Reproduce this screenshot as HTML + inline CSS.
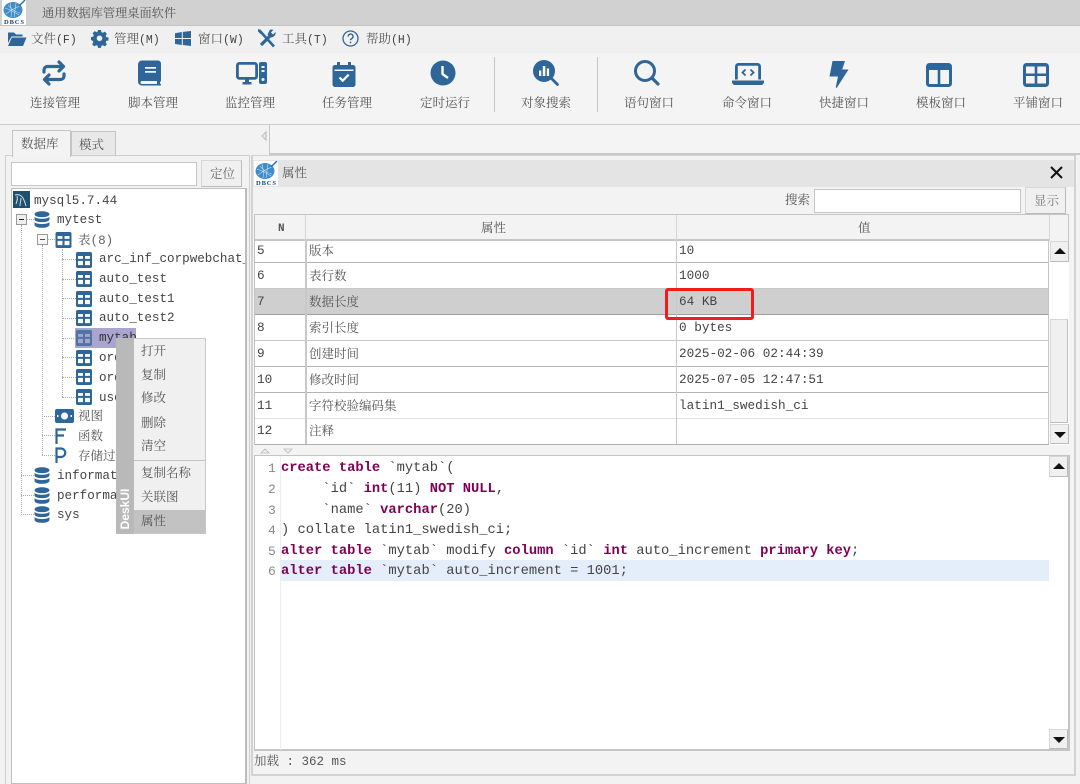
<!DOCTYPE html>
<html><head><meta charset="utf-8">
<style>
html,body{margin:0;padding:0;width:1080px;height:784px;overflow:hidden;background:#f2f2f2}
#r{position:relative;width:1080px;height:784px;overflow:hidden;filter:blur(.3px);font-family:"Liberation Serif","Noto Serif CJK SC",serif;color:#555;font-size:12.5px}
.b{position:absolute;box-sizing:border-box}
.t{position:absolute;white-space:nowrap;line-height:20px;height:20px;margin-top:1px}
.m{font-family:"Liberation Mono","Noto Serif CJK SC",monospace;color:#444;font-size:12.6px}
.c{font-family:"Liberation Mono",monospace;color:#444;font-size:13.77px;white-space:pre;margin-top:3px}
.c b{color:#7f0055}
svg{position:absolute;overflow:visible}
.g{color:#888;font-family:"Liberation Mono",monospace;font-size:13px;margin-top:3px}
.n{font-family:"Liberation Mono",monospace;color:#444;font-size:12.7px}
.btn{position:absolute;box-sizing:border-box;background:#f0f0f0;border:1px solid #d6d6d6;border-right-color:#bbb;border-bottom-color:#bbb}
.tri{position:absolute;width:0;height:0;border-left:6px solid transparent;border-right:6px solid transparent}
.dv{position:absolute;border-left:1px dotted #aaa}
.dh{position:absolute;border-top:1px dotted #aaa}
</style></head><body><div id="r">
<svg width="0" height="0" style="position:absolute"><defs>
<symbol id="tb" viewBox="1 1 14 14"><path fill="#2f6699" fill-rule="evenodd" d="M2.500 1h11A1.500 1.500 0 0 1 15 2.500v11a1.500 1.500 0 0 1-1.500 1.500h-11A1.500 1.500 0 0 1 1 13.500v-11A1.500 1.500 0 0 1 2.500 1zM2.800 4.500V7h4.300V4.500zM8.900 4.500V7h4.300V4.500zM2.800 8.800v3.700h4.300V8.800zM8.900 8.800v3.700h4.300V8.800z"/></symbol>
<symbol id="db" viewBox="1 0 14 16"><g fill="#2f6699"><path d="M1 3c0-1.600 3-2.800 7-2.800s7 1.200 7 2.800-3 2.800-7 2.800S1 4.600 1 3z"/><path d="M1 5.500c1.500 1.300 4 1.800 7 1.800s5.500-.5 7-1.800V8c0 1.400-3 2.500-7 2.500S1 9.400 1 8z"/><path d="M1 10.500c1.500 1.300 4 1.800 7 1.800s5.500-.5 7-1.800V13c0 1.500-3 2.800-7 2.800S1 14.500 1 13z"/></g></symbol>
<symbol id="ball" viewBox="0 0 24 19"><ellipse cx="11" cy="10" rx="9.500" ry="8" fill="#3f8ccb"/><path d="M3 8c4 1 9 4 14 7M4 14c4-3 8-6 14-8M8 3c1 4 2 9 1 14M14 3L12 17M6 5c3 4 7 7 12 8" stroke="#d6e9f6" stroke-width=".55" fill="none"/><path d="M17 6l6-6" stroke="#2a6aa5" stroke-width="1.400"/></symbol>
</defs></svg>

<!-- title bar -->
<div class="b" style="left:0;top:0;width:1080px;height:26px;background:#d1d1d1;border-bottom:1px solid #c4c4c4"></div>
<div class="b" style="left:2px;top:0;width:24px;height:25px;background:#fff"></div>
<svg style="left:2px;top:0" width="24" height="19"><use href="#ball" width="24" height="19"/></svg>
<svg style="left:2px;top:18px" width="24" height="7"><text x="12" y="6" text-anchor="middle" font-family="Liberation Serif" font-weight="bold" font-size="6.500" fill="#1c3f86" textLength="20">DBCS</text></svg>
<span class="t" style="left:42px;top:2px;font-size:12.2px">通用数据库管理桌面软件</span>

<!-- menu bar -->
<div class="b" style="left:0;top:26px;width:1080px;height:27px;background:#f0f0f0"></div>
<svg style="left:7px;top:30px" width="20" height="18" viewBox="0 0 20 18"><path fill="#2f6699" d="M1 2.500h6l2 2h6.500v2H4.500L1 13z"/><path fill="#2f6699" d="M4.800 7.500H19.500L16 16H1z"/></svg>
<span class="t" style="left:31px;top:28px">文件<span class="m" style="font-size:11.500px">(F)</span></span>
<svg style="left:91px;top:30px" width="17" height="17" viewBox="0 0 17 17"><path fill="#2f6699" fill-rule="evenodd" d="M7 .5h3l.4 2.100 1.500.7 1.900-1.200 2.100 2.100-1.200 1.900.6 1.500 2.200.4v3l-2.200.4-.6 1.500 1.200 1.900-2.100 2.100-1.900-1.200-1.500.6-.4 2.100H7l-.4-2.100-1.500-.6-1.900 1.200-2.100-2.100 1.200-1.900-.6-1.500L0 10.500v-3l2.200-.4.600-1.500L1.600 3.700l2.100-2.100 1.900 1.200 1-.7zM8.500 6a2.800 2.800 0 1 0 0 5.600 2.800 2.800 0 0 0 0-5.600z" transform="translate(0 -.5)"/></svg>
<span class="t" style="left:114px;top:28px">管理<span class="m" style="font-size:11.500px">(M)</span></span>
<svg style="left:175px;top:31px" width="16" height="15" viewBox="0 0 16 15"><path fill="#2f6699" d="M0 2.200L6.800 1v6H0zM7.800.9L16 0v7H7.800zM0 8h6.800v6L0 13zM7.800 8H16v7l-8.200-1z"/></svg>
<span class="t" style="left:198px;top:28px">窗口<span class="m" style="font-size:11.500px">(W)</span></span>
<svg style="left:258px;top:29px" width="18" height="19" viewBox="0 0 18 19"><g fill="none" stroke="#2f6699"><path stroke-width="2.600" d="M1.500 1.500l14.500 16"/><path stroke-width="3.200" d="M3 16l8.500-8.500"/></g><path fill="#2f6699" d="M12 .5l3.500.3-2.500 2.700 2 2 2.500-2.500c.6 2.600-1.400 5.700-5.500 5.500L9.500 5.500z"/><path fill="#2f6699" d="M0 0l3 1 1 3-1.500 1L0 2.500z"/></svg>
<span class="t" style="left:282px;top:28px">工具<span class="m" style="font-size:11.500px">(T)</span></span>
<svg style="left:342px;top:30px" width="17" height="17" viewBox="0 0 17 17"><circle cx="8.500" cy="8.500" r="7.500" fill="none" stroke="#2f6699" stroke-width="1.300"/><path d="M6.200 6.500a2.400 2.400 0 1 1 3.500 2.100c-.8.400-1.200.9-1.200 1.700" fill="none" stroke="#2f6699" stroke-width="1.400"/><circle cx="8.500" cy="12.500" r=".9" fill="#2f6699"/></svg>
<span class="t" style="left:366px;top:28px">帮助<span class="m" style="font-size:11.500px">(H)</span></span>

<!-- toolbar -->
<div class="b" style="left:0;top:53px;width:1080px;height:72px;background:#f4f4f4;border-bottom:1px solid #cbcbcb"></div>
<svg style="left:41px;top:60px" width="26" height="26" viewBox="0 0 26 26"><g fill="none" stroke="#2f6699" stroke-width="3.200" stroke-linecap="round" stroke-linejoin="round"><path d="M3 12V10a3.500 3.500 0 0 1 3.500-3.500H22"/><path d="M18 2l4.500 4.500L18 11"/><path d="M23 14v2a3.500 3.500 0 0 1-3.500 3.500H4"/><path d="M8 15l-4.500 4.500L8 24"/></g></svg>
<svg style="left:138px;top:60px" width="24" height="26" viewBox="0 0 24 26"><path fill="#2f6699" fill-rule="evenodd" d="M4 .5h16a3 3 0 0 1 3 3v17c0 .8-.5 1-1 1.500v1.500c.6.300 1 .6 1 1.200s-.4.800-1 .8H4a4 4 0 0 1-4-4V4.500a4 4 0 0 1 4-4zM7 7v1.800h11V7zM7 11v1.800h11V11zM4 21a1.500 1.500 0 0 0 0 3h15v-3z"/></svg>
<svg style="left:236px;top:62px" width="31" height="24" viewBox="0 0 31 24"><path fill="none" stroke="#2f6699" stroke-width="2.800" d="M3.400 1.400h15.200a2 2 0 0 1 2 2v11a2 2 0 0 1-2 2H3.400a2 2 0 0 1-2-2v-11a2 2 0 0 1 2-2z"/><path fill="#2f6699" d="M9 17h4v3h2.500v2.500h-9V20H9z"/><path fill="#2f6699" fill-rule="evenodd" d="M25 0h4a2 2 0 0 1 2 2v18a2 2 0 0 1-2 2h-4a2 2 0 0 1-2-2V2a2 2 0 0 1 2-2zm.5 4v2h3V4zm0 4v2h3V8zm1.500 8a1.500 1.500 0 1 0 0 3 1.500 1.500 0 0 0 0-3z"/></svg>
<svg style="left:332px;top:62px" width="24" height="25" viewBox="0 0 24 25"><path fill="#2f6699" d="M5 0h3v3h8V0h3v3h2a2.500 2.500 0 0 1 2.500 2.500v17A2.500 2.500 0 0 1 21 25H3a2.500 2.500 0 0 1-2.500-2.500v-17A2.500 2.500 0 0 1 3 3h2z"/><path fill="#f4f4f4" d="M2.500 7.500h19v1.500h-19z"/><path fill="none" stroke="#fff" stroke-width="2.200" d="M7.500 15.500l3.200 3.200 6-6"/></svg>
<svg style="left:430px;top:60px" width="26" height="26" viewBox="0 0 26 26"><circle cx="13" cy="13" r="12.500" fill="#2f6699"/><path d="M12.500 6v8l5.500 4" fill="none" stroke="#fff" stroke-width="2.400"/></svg>
<div class="b" style="left:494px;top:57px;width:1px;height:55px;background:#c6c6c6"></div>
<svg style="left:533px;top:60px" width="26" height="26" viewBox="0 0 26 26"><circle cx="11" cy="11" r="11" fill="#2f6699"/><path d="M18 18l6.500 6.500" stroke="#2f6699" stroke-width="2.800" stroke-linecap="round"/><path d="M6 10.500h2.300v5.500H6zM9.800 6h2.500v10H9.800zM13.800 8.500h2.300V16h-2.300z" fill="#fff"/></svg>
<div class="b" style="left:597px;top:57px;width:1px;height:55px;background:#c6c6c6"></div>
<svg style="left:634px;top:60px" width="26" height="26" viewBox="0 0 26 26"><circle cx="11" cy="11" r="9.500" fill="none" stroke="#2f6699" stroke-width="3"/><path d="M18 18l6 6" stroke="#2f6699" stroke-width="3.200" stroke-linecap="round"/></svg>
<svg style="left:732px;top:63px" width="32" height="23" viewBox="0 0 32 23"><path fill="none" stroke="#2f6699" stroke-width="2.800" d="M4.400 16.500V3.400a2 2 0 0 1 2-2h19.200a2 2 0 0 1 2 2v13.100"/><path fill="#2f6699" d="M0 17.500h32v1.500a3 3 0 0 1-3 3H3a3 3 0 0 1-3-3z"/><path fill="none" stroke="#2f6699" stroke-width="1.800" d="M13.500 6.500l-3 3 3 3M18.500 6.500l3 3-3 3"/></svg>
<svg style="left:829px;top:61px" width="20" height="27" viewBox="0 0 20 27"><path fill="#2f6699" d="M3.500 0h12.500l-2.800 8.500H19.500L8 26.500c-.5.600-1.400.2-1.200-.6L9 15.500H0.500z"/></svg>
<svg style="left:926px;top:63px" width="26" height="24" viewBox="0 0 26 24"><path fill="#2f6699" fill-rule="evenodd" d="M3.500 0h19A3.500 3.500 0 0 1 26 3.500v17a3.500 3.500 0 0 1-3.500 3.500h-19A3.500 3.500 0 0 1 0 20.500v-17A3.500 3.500 0 0 1 3.500 0zM3 7v14h8.700V7zM14.300 7v14H23V7z"/></svg>
<svg style="left:1023px;top:63px" width="26" height="24" viewBox="0 0 26 24"><path fill="#2f6699" fill-rule="evenodd" d="M3.500 0h19A3.500 3.500 0 0 1 26 3.500v17a3.500 3.500 0 0 1-3.500 3.500h-19A3.500 3.500 0 0 1 0 20.500v-17A3.500 3.500 0 0 1 3.500 0zM3 3.500v7h8.700v-7zM14.300 3.500v7H23v-7zM3 13v7.500h8.700V13zM14.300 13v7.500H23V13z"/></svg>

<span class="t" style="left:30px;top:92px">连接管理</span>
<span class="t" style="left:128px;top:92px">脚本管理</span>
<span class="t" style="left:225px;top:92px">监控管理</span>
<span class="t" style="left:322px;top:92px">任务管理</span>
<span class="t" style="left:420px;top:92px">定时运行</span>
<span class="t" style="left:521px;top:92px">对象搜索</span>
<span class="t" style="left:624px;top:92px">语句窗口</span>
<span class="t" style="left:722px;top:92px">命令窗口</span>
<span class="t" style="left:819px;top:92px">快捷窗口</span>
<span class="t" style="left:916px;top:92px">模板窗口</span>
<span class="t" style="left:1013px;top:92px">平铺窗口</span>

<!-- left pane -->
<div class="b" style="left:5px;top:155px;width:245px;height:629px;background:#f2f2f2;border:1px solid #cfcfcf;border-bottom:0"></div>
<div class="b" style="left:71px;top:131px;width:45px;height:25px;background:#e8e8e8;border:1px solid #c4c4c4;border-bottom:1px solid #cfcfcf"></div>
<div class="b" style="left:12px;top:130px;width:59px;height:27px;background:#f3f3f3;border:1px solid #c4c4c4;border-bottom:0"></div>
<span class="t" style="left:21px;top:133px">数据库</span>
<span class="t" style="left:79px;top:134px">模式</span>
<svg style="left:261px;top:131px" width="6" height="10"><path d="M5 1L1 5l4 4z" fill="#eee" stroke="#bbb"/></svg>
<div class="b" style="left:269px;top:125px;width:811px;height:30px;background:#f4f4f4;border-left:1px solid #c8c8c8;border-bottom:2px solid #c8c8c8"></div>

<div class="b" style="left:11px;top:162px;width:186px;height:24px;background:#fff;border:1px solid #c6c6c6"></div>
<div class="btn" style="left:201px;top:160px;width:41px;height:27px"></div>
<span class="t" style="left:210px;top:163px;color:#666">定位</span>

<div class="b" style="left:11px;top:188px;width:236px;height:596px;background:#fff;border:1px solid #c0c0c0;border-right:2px solid #bbb"></div>

<!-- tree lines -->
<div class="dv" style="left:21px;top:225px;height:290px"></div>
<div class="dv" style="left:42px;top:245px;height:210px"></div>
<div class="dv" style="left:62px;top:249px;height:148px"></div>
<div class="dh" style="left:62px;top:259px;width:14px"></div>
<div class="dh" style="left:62px;top:279px;width:14px"></div>
<div class="dh" style="left:62px;top:298px;width:14px"></div>
<div class="dh" style="left:62px;top:318px;width:14px"></div>
<div class="dh" style="left:62px;top:338px;width:14px"></div>
<div class="dh" style="left:62px;top:357px;width:14px"></div>
<div class="dh" style="left:62px;top:377px;width:14px"></div>
<div class="dh" style="left:62px;top:397px;width:14px"></div>
<div class="dh" style="left:42px;top:416px;width:13px"></div>
<div class="dh" style="left:42px;top:435px;width:13px"></div>
<div class="dh" style="left:42px;top:455px;width:13px"></div>
<div class="dh" style="left:21px;top:475px;width:13px"></div>
<div class="dh" style="left:21px;top:495px;width:13px"></div>
<div class="dh" style="left:21px;top:514px;width:13px"></div>
<div class="dh" style="left:26px;top:219px;width:8px"></div>
<div class="dh" style="left:47px;top:239px;width:8px"></div>

<div class="b" style="left:16px;top:214px;width:11px;height:11px;background:#eee;border:1px solid #999"><div class="b" style="left:2px;top:4px;width:5px;height:1px;background:#222"></div></div>
<div class="b" style="left:37px;top:234px;width:11px;height:11px;background:#f6f6f6;border:1px solid #999"><div class="b" style="left:2px;top:4px;width:5px;height:1px;background:#555"></div></div>

<svg style="left:13px;top:191px" width="17" height="17" viewBox="0 0 17 17"><rect width="17" height="17" fill="#20506f"/><path d="M2 4c3-1 6 0 8 3 1 2 2 4 3 8M4 5c1 3 0 5-1 8M8 7c0 3-1 5-1 8" fill="none" stroke="#cfe0ea" stroke-width="1"/></svg>
<span class="t m" style="left:34px;top:190px">mysql5.7.44</span>
<svg style="left:34px;top:211px" width="16" height="17"><use href="#db" width="16" height="17"/></svg>
<span class="t m" style="left:57px;top:209px">mytest</span>
<svg style="left:55px;top:232px" width="17" height="16"><use href="#tb" width="17" height="16"/></svg>
<span class="t" style="left:78px;top:229px">表<span class="m" style="color:#666">(8)</span></span>

<div class="b" style="left:75px;top:328px;width:61px;height:20px;background:#a9a5cf"></div>
<svg style="left:76px;top:252px" width="16" height="16"><use href="#tb" width="16" height="16"/></svg>
<span class="t m" style="left:99px;top:248px;width:146px;overflow:hidden">arc_inf_corpwebchat_log</span>
<svg style="left:76px;top:271px" width="16" height="16"><use href="#tb" width="16" height="16"/></svg>
<span class="t m" style="left:99px;top:268px">auto_test</span>
<svg style="left:76px;top:291px" width="16" height="16"><use href="#tb" width="16" height="16"/></svg>
<span class="t m" style="left:99px;top:288px">auto_test1</span>
<svg style="left:76px;top:310px" width="16" height="16"><use href="#tb" width="16" height="16"/></svg>
<span class="t m" style="left:99px;top:307px">auto_test2</span>
<svg style="left:76px;top:330px;opacity:.75" width="16" height="16"><use href="#tb" width="16" height="16"/></svg>
<span class="t m" style="left:99px;top:327px;color:#333">mytab</span>
<svg style="left:76px;top:350px" width="16" height="16"><use href="#tb" width="16" height="16"/></svg>
<span class="t m" style="left:99px;top:347px">orders</span>
<svg style="left:76px;top:369px" width="16" height="16"><use href="#tb" width="16" height="16"/></svg>
<span class="t m" style="left:99px;top:367px">orders2</span>
<svg style="left:76px;top:389px" width="16" height="16"><use href="#tb" width="16" height="16"/></svg>
<span class="t m" style="left:99px;top:387px">user</span>
<svg style="left:55px;top:409px" width="19" height="14" viewBox="0 0 19 14"><path fill="#2f6699" fill-rule="evenodd" d="M2 0h15a2 2 0 0 1 2 2v10a2 2 0 0 1-2 2H2a2 2 0 0 1-2-2V2a2 2 0 0 1 2-2zm7.500 3.500a3.500 3.500 0 1 0 0 7 3.500 3.500 0 0 0 0-7zM2 6v2h1.500V6zM15.500 6v2H17V6z"/></svg>
<span class="t" style="left:78px;top:405px">视图</span>
<svg style="left:55px;top:428px" width="12" height="16" viewBox="0 0 12 16"><path fill="none" stroke="#2f6699" stroke-width="2.200" d="M1.500 16V1.500H11M1.500 7.500H9"/></svg>
<span class="t" style="left:78px;top:425px">函数</span>
<svg style="left:55px;top:447px" width="12" height="16" viewBox="0 0 12 16"><path fill="none" stroke="#2f6699" stroke-width="2.200" d="M1.500 16V1.500H6a4 4 0 0 1 0 8.500H1.500"/></svg>
<span class="t" style="left:78px;top:445px">存储过程</span>
<svg style="left:34px;top:467px" width="16" height="17"><use href="#db" width="16" height="17"/></svg>
<span class="t m" style="left:57px;top:465px">information_schema</span>
<svg style="left:34px;top:487px" width="16" height="17"><use href="#db" width="16" height="17"/></svg>
<span class="t m" style="left:57px;top:485px">performance_schema</span>
<svg style="left:34px;top:506px" width="16" height="17"><use href="#db" width="16" height="17"/></svg>
<span class="t m" style="left:57px;top:504px">sys</span>

<!-- right panel -->
<div class="b" style="left:250px;top:155px;width:830px;height:629px;background:#f2f2f2"></div>
<div class="b" style="left:251px;top:155px;width:825px;height:621px;background:#f3f3f3;border:2px solid #d2d2d2;border-top:1px solid #d2d2d2"></div>
<div class="b" style="left:253px;top:160px;width:821px;height:27px;background:#e4e4e4"></div>
<div class="b" style="left:254px;top:161px;width:24px;height:25px;background:#fff"></div>
<svg style="left:254px;top:161px" width="24" height="19"><use href="#ball" width="24" height="19"/></svg>
<svg style="left:254px;top:179px" width="24" height="7"><text x="12" y="6" text-anchor="middle" font-family="Liberation Serif" font-weight="bold" font-size="6.500" fill="#1c3f86" textLength="20">DBCS</text></svg>
<span class="t" style="left:282px;top:162px">属性</span>
<svg style="left:1050px;top:166px" width="13" height="13" viewBox="0 0 13 13"><path d="M1 1l11 11M12 1L1 12" stroke="#111" stroke-width="2"/></svg>
<span class="t" style="left:785px;top:189px">搜索</span>
<div class="b" style="left:814px;top:189px;width:207px;height:24px;background:#fff;border:1px solid #c6c6c6"></div>
<div class="btn" style="left:1025px;top:187px;width:41px;height:27px"></div>
<span class="t" style="left:1034px;top:190px;color:#777">显示</span>

<!-- table -->
<div class="b" style="left:254px;top:214px;width:815px;height:231px;background:#fff;border-top:1px solid #c4c4c4;border-left:1px solid #c4c4c4"></div>
<div class="b" style="left:255px;top:215px;width:794px;height:26px;background:#f3f3f3;border-bottom:2px solid #c6c6c6"></div>
<div class="b" style="left:1049px;top:215px;width:20px;height:26px;background:#f3f3f3;border-left:1px solid #d6d6d6;border-right:1px solid #c4c4c4"></div>
<div class="b" style="left:305px;top:215px;width:1px;height:26px;background:#d4d4d4"></div>
<div class="b" style="left:676px;top:215px;width:1px;height:26px;background:#d4d4d4"></div>
<span class="t n" style="left:278px;top:218px;font-size:11px;font-weight:bold;color:#555">N</span>
<span class="t" style="left:481px;top:217px">属性</span>
<span class="t" style="left:858px;top:217px">值</span>

<div class="b" style="left:255px;top:289px;width:794px;height:26px;background:#cfcfcf"></div>
<div class="b" style="left:255px;top:262px;width:794px;height:1px;background:#b4b4b4"></div>
<div class="b" style="left:255px;top:288px;width:794px;height:1px;background:#c8c8c8"></div>
<div class="b" style="left:255px;top:314px;width:794px;height:1px;background:#a0a0a0"></div>
<div class="b" style="left:255px;top:340px;width:794px;height:1px;background:#c8c8c8"></div>
<div class="b" style="left:255px;top:366px;width:794px;height:1px;background:#b4b4b4"></div>
<div class="b" style="left:255px;top:392px;width:794px;height:1px;background:#b4b4b4"></div>
<div class="b" style="left:255px;top:418px;width:794px;height:1px;background:#e2e2e2"></div>
<div class="b" style="left:255px;top:444px;width:794px;height:1px;background:#b0b0b0"></div>
<div class="b" style="left:305px;top:241px;width:2px;height:203px;background:#c8c8c8"></div>
<div class="b" style="left:676px;top:241px;width:1px;height:203px;background:#c8c8c8"></div>
<div class="b" style="left:1048px;top:241px;width:1px;height:203px;background:#c4c4c4"></div>

<span class="t n" style="left:257px;top:240px">5</span><span class="t" style="left:309px;top:240px">版本</span><span class="t n" style="left:679px;top:240px">10</span>
<span class="t n" style="left:257px;top:265px">6</span><span class="t" style="left:309px;top:265px">表行数</span><span class="t n" style="left:679px;top:265px">1000</span>
<span class="t n" style="left:257px;top:291px">7</span><span class="t" style="left:309px;top:291px">数据长度</span><span class="t n" style="left:679px;top:291px">64 KB</span>
<span class="t n" style="left:257px;top:317px">8</span><span class="t" style="left:309px;top:317px">索引长度</span><span class="t n" style="left:679px;top:317px">0 bytes</span>
<span class="t n" style="left:257px;top:343px">9</span><span class="t" style="left:309px;top:343px">创建时间</span><span class="t n" style="left:679px;top:343px">2025-02-06 02:44:39</span>
<span class="t n" style="left:257px;top:369px">10</span><span class="t" style="left:309px;top:369px">修改时间</span><span class="t n" style="left:679px;top:369px">2025-07-05 12:47:51</span>
<span class="t n" style="left:257px;top:395px">11</span><span class="t" style="left:309px;top:395px">字符校验编码集</span><span class="t n" style="left:679px;top:395px">latin1_swedish_ci</span>
<span class="t n" style="left:257px;top:420px">12</span><span class="t" style="left:309px;top:420px">注释</span>

<div class="b" style="left:665px;top:288px;width:89px;height:32px;border:3px solid #f01c1c;border-radius:3px"></div>

<!-- table scrollbar -->
<div class="btn" style="left:1050px;top:241px;width:19px;height:21px"></div>
<div class="tri" style="left:1054px;top:248px;border-bottom:6px solid #111"></div>
<div class="btn" style="left:1050px;top:319px;width:18px;height:104px"></div>
<div class="btn" style="left:1050px;top:424px;width:19px;height:20px"></div>
<div class="tri" style="left:1054px;top:432px;border-top:6px solid #111"></div>

<!-- splitter -->
<svg style="left:260px;top:448px" width="32" height="6"><path d="M1 5l4-4 4 4zM24 1h8l-4 4z" fill="#eee" stroke="#bbb" stroke-width=".8"/></svg>

<!-- editor -->
<div class="b" style="left:254px;top:455px;width:816px;height:296px;background:#fff;border:1px solid #c4c4c4;border-width:1px 2px 2px 1px"></div>
<div class="b" style="left:280px;top:456px;width:1px;height:294px;background:#eee"></div>
<div class="b" style="left:281px;top:560px;width:768px;height:21px;background:#e4eefa"></div>

<span class="t g" style="left:268px;top:456px">1</span>
<span class="t g" style="left:268px;top:477px">2</span>
<span class="t g" style="left:268px;top:498px">3</span>
<span class="t g" style="left:268px;top:518px">4</span>
<span class="t g" style="left:268px;top:539px">5</span>
<span class="t g" style="left:268px;top:559px">6</span>

<span class="t c" style="left:281px;top:456px"><b>create table</b> `mytab`(</span>
<span class="t c" style="left:281px;top:477px">     `id` <b>int</b>(11) <b>NOT NULL</b>,</span>
<span class="t c" style="left:281px;top:498px">     `name` <b>varchar</b>(20)</span>
<span class="t c" style="left:281px;top:518px">) collate latin1_swedish_ci;</span>
<span class="t c" style="left:281px;top:539px"><b>alter table</b> `mytab` modify <b>column</b> `id` <b>int</b> auto_increment <b>primary key</b>;</span>
<span class="t c" style="left:281px;top:559px"><b>alter table</b> `mytab` auto_increment = 1001;</span>

<div class="btn" style="left:1049px;top:456px;width:19px;height:21px"></div>
<div class="tri" style="left:1053px;top:463px;border-bottom:6px solid #111"></div>
<div class="btn" style="left:1049px;top:729px;width:19px;height:20px"></div>
<div class="tri" style="left:1053px;top:737px;border-top:6px solid #111"></div>

<span class="t" style="left:254px;top:750px">加载<span class="m" style="font-size:12.500px;color:#555"> : 362 ms</span></span>

<!-- context menu -->
<div class="b" style="left:116px;top:338px;width:90px;height:196px;background:#f0f0f0;border:1px solid #c8c8c8"></div>
<div class="b" style="left:116px;top:338px;width:18px;height:196px;background:#b9b9b9"></div>
<span class="t" style="left:103px;top:498px;width:44px;text-align:center;font:bold 12px/20px 'Liberation Sans',sans-serif;color:#fff;transform:rotate(-90deg)">DeskUI</span>
<div class="b" style="left:134px;top:460px;width:71px;height:1px;background:#c4c4c4"></div>
<div class="b" style="left:134px;top:510px;width:71px;height:23px;background:#c2c2c2"></div>
<span class="t" style="left:141px;top:340px">打开</span>
<span class="t" style="left:141px;top:364px">复制</span>
<span class="t" style="left:141px;top:387px">修改</span>
<span class="t" style="left:141px;top:412px">删除</span>
<span class="t" style="left:141px;top:435px">清空</span>
<span class="t" style="left:141px;top:462px">复制名称</span>
<span class="t" style="left:141px;top:486px">关联图</span>
<span class="t" style="left:141px;top:510px">属性</span>
</div></body></html>
